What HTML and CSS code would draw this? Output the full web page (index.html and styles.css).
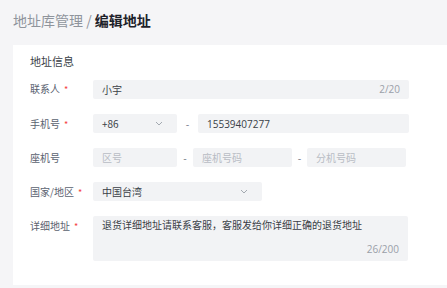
FILE: index.html
```html
<!DOCTYPE html>
<html lang="zh-CN">
<head>
    <meta charset="UTF-8">
    <title>编辑地址</title>
    <link rel="stylesheet" href="styles.css">
</head>
<body>
<div class="page">
    <div class="crumb"><span class="crumb-parent">地址库管理 /</span> <span class="crumb-cur">编辑地址</span></div>
    <div class="card">
        <div class="section-title">地址信息</div>

        <div class="row">
            <div class="label">联系人<i class="req">*</i></div>
            <div class="field w-full">
                <span class="val">小宇</span>
                <span class="count">2/20</span>
            </div>
        </div>

        <div class="row">
            <div class="label">手机号<i class="req">*</i></div>
            <div class="field w-code">
                <span class="val">+86</span>
                <svg class="arrow" width="8" height="5" viewBox="0 0 8 5"><path d="M1 1l3 3 3-3" fill="none" stroke="#9aa0a8" stroke-width="0.9"/></svg>
            </div>
            <span class="dash dash-a">-</span>
            <div class="field w-phone">
                <span class="val num">15539407277</span>
            </div>
        </div>

        <div class="row">
            <div class="label">座机号</div>
            <div class="field w-code">
                <span class="ph">区号</span>
            </div>
            <span class="dash dash-b">-</span>
            <div class="field w-tel">
                <span class="ph">座机号码</span>
            </div>
            <span class="dash dash-c">-</span>
            <div class="field w-tel">
                <span class="ph">分机号码</span>
            </div>
        </div>

        <div class="row">
            <div class="label">国家/地区<i class="req">*</i></div>
            <div class="field w-country">
                <span class="val">中国台湾</span>
                <svg class="arrow" width="8" height="5" viewBox="0 0 8 5"><path d="M1 1l3 3 3-3" fill="none" stroke="#9aa0a8" stroke-width="0.9"/></svg>
            </div>
        </div>

        <div class="row row-top">
            <div class="label">详细地址<i class="req">*</i></div>
            <div class="field area">
                <span class="val">退货详细地址请联系客服，客服发给你详细正确的退货地址</span>
                <span class="count">26/200</span>
            </div>
        </div>
    </div>
</div>
</body>
</html>
```
FILE: styles.css
```css
*{
    padding: 0;
    margin: 0;
    box-sizing: border-box;
}
body{
    background: #f5f5f7;
    font-family: "Open Sans", "Noto Sans CJK SC", sans-serif;
    color: #1d2129;
}
.page{
    padding: 8px 0 0 13px;
}
.crumb{
    height: 25px;
    line-height: 25px;
    font-size: 14px;
    font-family: "Noto Sans CJK SC", sans-serif;
}
.crumb-parent{
    color: #8f949c;
}
.crumb-cur{
    color: #1d2129;
    font-weight: bold;
}
.card{
    margin-top: 12px;
    height: 240px;
    background: #fff;
    padding: 8px 0 0 17px;
    font-family: "Noto Sans CJK SC", sans-serif;
}
.section-title{
    font-size: 11px;
    line-height: 16px;
    color: #3a3f47;
    margin-bottom: 10px;
}
.row{
    display: flex;
    align-items: center;
    margin-bottom: 14.5px;
}
.row-top{
    align-items: flex-start;
}
.label{
    width: 63px;
    font-size: 10px;
    color: #5a6270;
    line-height: 19px;
}
.req{
    font-style: normal;
    color: #f53f3f;
    margin-left: 4px;
    font-size: 9px;
}
.field{
    height: 19px;
    background: #f2f3f5;
    border-radius: 2px;
    display: flex;
    align-items: center;
    padding: 0 9px;
    font-size: 10px;
}
.val{
    color: #3a3f47;
}
.num{
    font-family: "Open Sans", sans-serif;
}
.ph{
    color: #b8bcc4;
}
.count{
    margin-left: auto;
    color: #9aa0a8;
    font-family: "Open Sans", sans-serif;
}
.arrow{
    margin-left: auto;
    margin-right: 5px;
}
.w-full{ width: 316px; }
.w-code{ width: 84px; }
.w-phone{ width: 211px; }
.w-tel{ width: 99px; }
.w-country{ width: 169px; }
.dash{
    font-size: 10px;
    color: #6b7280;
    text-align: center;
}
.dash-a{ width: 21px; }
.dash-b{ width: 16px; }
.dash-c{ width: 15px; }
.area{
    width: 315px;
    height: 45px;
    flex-direction: column;
    align-items: stretch;
    padding: 3px 9px 5px;
}
.area .val{
    line-height: 12px;
}
.area .count{
    margin-top: auto;
    text-align: right;
}
```
